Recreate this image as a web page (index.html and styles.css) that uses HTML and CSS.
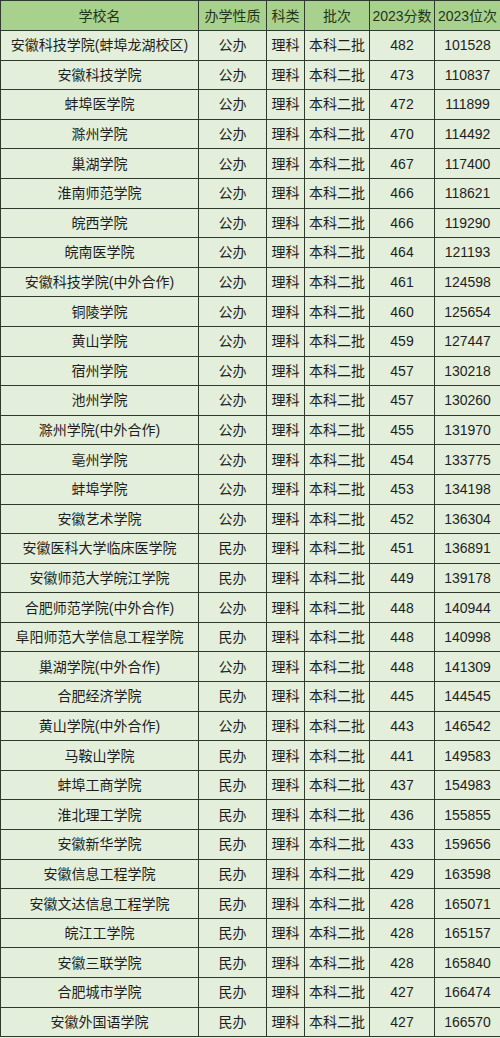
FILE: index.html
```html
<!DOCTYPE html>
<html lang="zh">
<head>
<meta charset="utf-8">
<link rel="stylesheet" href="styles.css">
</head>
<body>
<table class="grid">
<colgroup>
<col class="c1"><col class="c2"><col class="c3"><col class="c4"><col class="c5"><col class="c6">
</colgroup>
<thead>
<tr class="head"><th>学校名</th><th>办学性质</th><th>科类</th><th>批次</th><th>2023分数</th><th>2023位次</th></tr>
</thead>
<tbody>
<tr><td>安徽科技学院(蚌埠龙湖校区)</td><td>公办</td><td>理科</td><td>本科二批</td><td>482</td><td>101528</td></tr>
<tr><td>安徽科技学院</td><td>公办</td><td>理科</td><td>本科二批</td><td>473</td><td>110837</td></tr>
<tr><td>蚌埠医学院</td><td>公办</td><td>理科</td><td>本科二批</td><td>472</td><td>111899</td></tr>
<tr><td>滁州学院</td><td>公办</td><td>理科</td><td>本科二批</td><td>470</td><td>114492</td></tr>
<tr><td>巢湖学院</td><td>公办</td><td>理科</td><td>本科二批</td><td>467</td><td>117400</td></tr>
<tr><td>淮南师范学院</td><td>公办</td><td>理科</td><td>本科二批</td><td>466</td><td>118621</td></tr>
<tr><td>皖西学院</td><td>公办</td><td>理科</td><td>本科二批</td><td>466</td><td>119290</td></tr>
<tr><td>皖南医学院</td><td>公办</td><td>理科</td><td>本科二批</td><td>464</td><td>121193</td></tr>
<tr><td>安徽科技学院(中外合作)</td><td>公办</td><td>理科</td><td>本科二批</td><td>461</td><td>124598</td></tr>
<tr><td>铜陵学院</td><td>公办</td><td>理科</td><td>本科二批</td><td>460</td><td>125654</td></tr>
<tr><td>黄山学院</td><td>公办</td><td>理科</td><td>本科二批</td><td>459</td><td>127447</td></tr>
<tr><td>宿州学院</td><td>公办</td><td>理科</td><td>本科二批</td><td>457</td><td>130218</td></tr>
<tr><td>池州学院</td><td>公办</td><td>理科</td><td>本科二批</td><td>457</td><td>130260</td></tr>
<tr><td>滁州学院(中外合作)</td><td>公办</td><td>理科</td><td>本科二批</td><td>455</td><td>131970</td></tr>
<tr><td>亳州学院</td><td>公办</td><td>理科</td><td>本科二批</td><td>454</td><td>133775</td></tr>
<tr><td>蚌埠学院</td><td>公办</td><td>理科</td><td>本科二批</td><td>453</td><td>134198</td></tr>
<tr><td>安徽艺术学院</td><td>公办</td><td>理科</td><td>本科二批</td><td>452</td><td>136304</td></tr>
<tr><td>安徽医科大学临床医学院</td><td>民办</td><td>理科</td><td>本科二批</td><td>451</td><td>136891</td></tr>
<tr><td>安徽师范大学皖江学院</td><td>民办</td><td>理科</td><td>本科二批</td><td>449</td><td>139178</td></tr>
<tr><td>合肥师范学院(中外合作)</td><td>公办</td><td>理科</td><td>本科二批</td><td>448</td><td>140944</td></tr>
<tr><td>阜阳师范大学信息工程学院</td><td>民办</td><td>理科</td><td>本科二批</td><td>448</td><td>140998</td></tr>
<tr><td>巢湖学院(中外合作)</td><td>公办</td><td>理科</td><td>本科二批</td><td>448</td><td>141309</td></tr>
<tr><td>合肥经济学院</td><td>民办</td><td>理科</td><td>本科二批</td><td>445</td><td>144545</td></tr>
<tr><td>黄山学院(中外合作)</td><td>公办</td><td>理科</td><td>本科二批</td><td>443</td><td>146542</td></tr>
<tr><td>马鞍山学院</td><td>民办</td><td>理科</td><td>本科二批</td><td>441</td><td>149583</td></tr>
<tr><td>蚌埠工商学院</td><td>民办</td><td>理科</td><td>本科二批</td><td>437</td><td>154983</td></tr>
<tr><td>淮北理工学院</td><td>民办</td><td>理科</td><td>本科二批</td><td>436</td><td>155855</td></tr>
<tr><td>安徽新华学院</td><td>民办</td><td>理科</td><td>本科二批</td><td>433</td><td>159656</td></tr>
<tr><td>安徽信息工程学院</td><td>民办</td><td>理科</td><td>本科二批</td><td>429</td><td>163598</td></tr>
<tr><td>安徽文达信息工程学院</td><td>民办</td><td>理科</td><td>本科二批</td><td>428</td><td>165071</td></tr>
<tr><td>皖江工学院</td><td>民办</td><td>理科</td><td>本科二批</td><td>428</td><td>165157</td></tr>
<tr><td>安徽三联学院</td><td>民办</td><td>理科</td><td>本科二批</td><td>428</td><td>165840</td></tr>
<tr><td>合肥城市学院</td><td>民办</td><td>理科</td><td>本科二批</td><td>427</td><td>166474</td></tr>
<tr><td>安徽外国语学院</td><td>民办</td><td>理科</td><td>本科二批</td><td>427</td><td>166570</td></tr>
</tbody>
</table>
</body>
</html>
```
FILE: styles.css
```css
html, body {
  margin: 0;
  padding: 0;
  background: #e3efda;
}
.grid {
  width: 500px;
  border-collapse: collapse;
  table-layout: fixed;
  font-family: "Liberation Sans", "Noto Sans CJK SC", sans-serif;
  font-size: 14px;
  color: #1e1e1e;
  background: #e3efda;
}
.c1 { width: 198px; }
.c2 { width: 68px; }
.c3 { width: 38px; }
.c4 { width: 65px; }
.c5 { width: 65px; }
.c6 { width: 66px; }
.grid th, .grid td {
  border: 1px solid #2f3a2c;
  padding: 0;
  text-align: center;
  white-space: nowrap;
  overflow: hidden;
  height: 28.6px;
  line-height: 18px;
}
.grid th {
  background: #a9d18e;
  font-weight: normal;
  color: #1f3517;
  height: 29px;
}
```
